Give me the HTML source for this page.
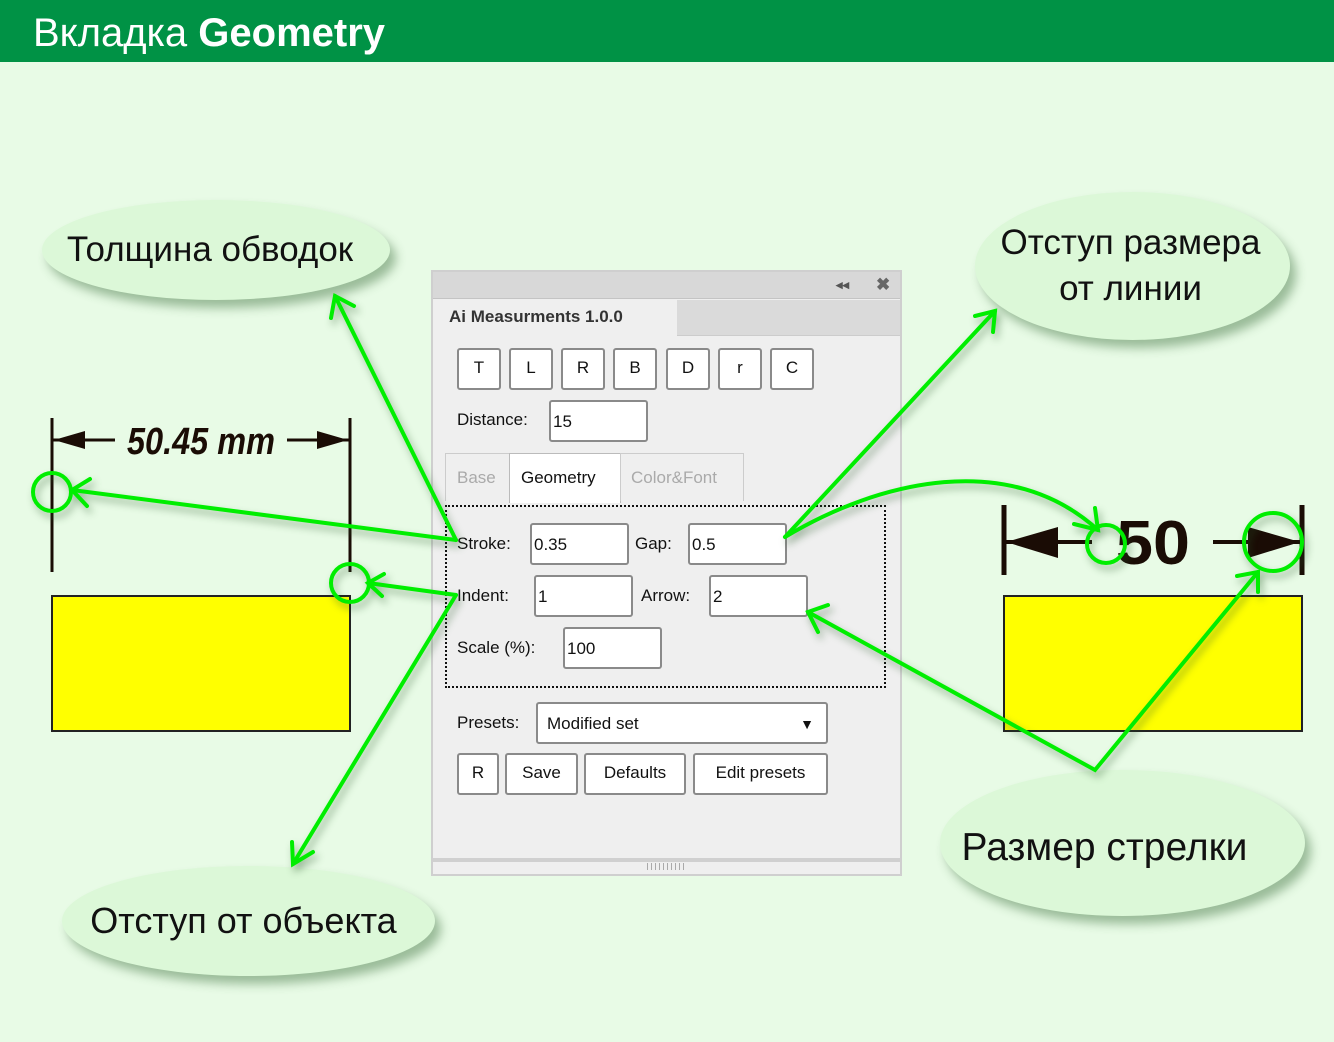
<!DOCTYPE html>
<html><head><meta charset="utf-8"><style>
*{margin:0;padding:0;box-sizing:border-box}
body{width:1334px;height:1042px;background:#e8fbe6;position:relative;overflow:hidden;font-family:"Liberation Sans",sans-serif}
.hdr{position:absolute;left:0;top:0;width:1334px;height:62px;background:#009245;color:#fff;font-size:40px;padding-left:33px;line-height:66px}
.ell{position:absolute;background:#dcf8d8;border-radius:50%;box-shadow:6px 8px 10px rgba(60,110,60,.45);display:flex;align-items:center;justify-content:center;text-align:center;font-size:35px;color:#111;line-height:46px}
.a{position:absolute}
.panel{position:absolute;left:431px;top:270px;width:471px;height:606px;background:#efefef;border:2px solid #cfcfcf;font-size:17px;color:#111}
.b{position:absolute;background:#fff;border:2px solid #8a8a8a;border-radius:3px;text-align:center;line-height:36px}
.in{position:absolute;background:#fff;border:2px solid #8a8a8a;border-radius:3px;padding-left:2px;line-height:40px}
.l{position:absolute}
.yr{position:absolute;background:#ffff00;border:2px solid #222}
</style></head><body>
<div class="hdr">Вкладка <b>Geometry</b></div>

<div class="ell" style="left:42px;top:200px;width:348px;height:100px;padding-right:12px">Толщина обводок</div>
<div class="ell" style="left:975px;top:192px;width:315px;height:148px;padding-right:4px">Отступ размера<br>от линии</div>
<div class="ell" style="left:940px;top:770px;width:365px;height:146px;font-size:39px;padding-right:36px;padding-top:10px">Размер стрелки</div>
<div class="ell" style="left:62px;top:866px;width:373px;height:110px;font-size:36px;padding-right:10px;padding-top:0">Отступ от объекта</div>

<div class="yr" style="left:51px;top:595px;width:300px;height:137px"></div>
<div class="yr" style="left:1003px;top:595px;width:300px;height:137px"></div>

<svg class="a" style="left:0;top:0" width="1334" height="1042">
<g stroke="#1a0c05" stroke-width="3" fill="#1a0c05">
<line x1="52" y1="418" x2="52" y2="572"/><line x1="350" y1="418" x2="350" y2="572"/>
<line x1="52" y1="440" x2="115" y2="440"/><line x1="287" y1="440" x2="350" y2="440"/>
<polygon points="54,440 85,431 85,449" stroke="none"/><polygon points="348,440 317,431 317,449" stroke="none"/>
<line x1="1004" y1="505" x2="1004" y2="575" stroke-width="5"/><line x1="1302" y1="505" x2="1302" y2="575" stroke-width="5"/>
<line x1="1004" y1="542" x2="1092" y2="542" stroke-width="4"/><line x1="1213" y1="542" x2="1300" y2="542" stroke-width="4"/>
<polygon points="1006,542 1058,527 1058,558" stroke="none"/><polygon points="1300,542 1248,527 1248,558" stroke="none"/>
</g>
<text x="127" y="454" font-family="Liberation Sans" font-style="italic" font-weight="bold" font-size="38" fill="#1a0c05" textLength="148" lengthAdjust="spacingAndGlyphs">50.45 mm</text>
<text x="1116" y="564" font-family="Liberation Sans" font-weight="bold" font-size="62" fill="#1a0c05" textLength="74" lengthAdjust="spacingAndGlyphs">50</text>
</svg>

<div class="panel">
<div style="position:absolute;left:0;top:0;width:467px;height:27px;background:#d8d8d8;border-bottom:1px solid #c4c4c4"></div>
<div style="position:absolute;left:403px;top:5px;font-size:13px;color:#555;font-weight:bold">◂◂</div>
<div style="position:absolute;left:443px;top:3px;font-size:17px;color:#666;font-weight:bold">✖</div>
<div style="position:absolute;left:0;top:28px;width:467px;height:36px;background:#dadada;border-bottom:1px solid #ccc"></div>
<div style="position:absolute;left:0;top:28px;width:244px;height:37px;background:#efefef;font-weight:bold;padding:7px 0 0 16px;color:#333">Ai Measurments 1.0.0</div>
<div class="b" style="left:24px;top:76px;width:44px;height:42px">T</div>
<div class="b" style="left:76px;top:76px;width:44px;height:42px">L</div>
<div class="b" style="left:128px;top:76px;width:44px;height:42px">R</div>
<div class="b" style="left:180px;top:76px;width:44px;height:42px">B</div>
<div class="b" style="left:233px;top:76px;width:44px;height:42px">D</div>
<div class="b" style="left:285px;top:76px;width:44px;height:42px">r</div>
<div class="b" style="left:337px;top:76px;width:44px;height:42px">C</div>
<div class="l" style="left:24px;top:138px">Distance:</div>
<div class="in" style="left:116px;top:128px;width:99px;height:42px">15</div>
<div style="position:absolute;left:12px;top:181px;width:66px;height:48px;border:1px solid #ccc;border-bottom:none;color:#aaa;padding:14px 0 0 11px">Base</div>
<div style="position:absolute;left:76px;top:181px;width:112px;height:50px;border:1px solid #bbb;border-bottom:none;background:#fff;padding:14px 0 0 11px">Geometry</div>
<div style="position:absolute;left:187px;top:181px;width:124px;height:48px;border:1px solid #ccc;border-bottom:none;color:#aaa;padding:14px 0 0 10px">Color&amp;Font</div>
<div style="position:absolute;left:12px;top:233px;width:441px;height:183px;border:2px dotted #111"></div>
<div class="l" style="left:24px;top:262px">Stroke:</div>
<div class="in" style="left:97px;top:251px;width:99px;height:42px">0.35</div>
<div class="l" style="left:202px;top:262px">Gap:</div>
<div class="in" style="left:255px;top:251px;width:99px;height:42px">0.5</div>
<div class="l" style="left:24px;top:314px">Indent:</div>
<div class="in" style="left:101px;top:303px;width:99px;height:42px">1</div>
<div class="l" style="left:208px;top:314px">Arrow:</div>
<div class="in" style="left:276px;top:303px;width:99px;height:42px">2</div>
<div class="l" style="left:24px;top:366px">Scale (%):</div>
<div class="in" style="left:130px;top:355px;width:99px;height:42px">100</div>
<div class="l" style="left:24px;top:441px">Presets:</div>
<div class="in" style="left:103px;top:430px;width:292px;height:42px;padding-left:9px">Modified set<span style="position:absolute;right:12px;top:0;font-size:14px">▼</span></div>
<div class="b" style="left:24px;top:481px;width:42px;height:42px">R</div>
<div class="b" style="left:72px;top:481px;width:73px;height:42px">Save</div>
<div class="b" style="left:151px;top:481px;width:102px;height:42px">Defaults</div>
<div class="b" style="left:260px;top:481px;width:135px;height:42px">Edit presets</div>
<div style="position:absolute;left:0;top:586px;width:467px;height:4px;background:#d0d0d0"></div>
<div style="position:absolute;left:214px;top:591px;width:40px;height:7px;background:repeating-linear-gradient(90deg,#aaa 0 1px,transparent 1px 4px)"></div>
</div>

<svg class="a" style="left:0;top:0;filter:drop-shadow(3px 5px 4px rgba(40,90,40,.45))" width="1334" height="1042">
<g stroke="#00ee00" stroke-width="4" fill="none" stroke-linecap="round">
<line x1="456" y1="540" x2="335" y2="296"/><polyline points="331,318 335,296 354,306"/>
<line x1="456" y1="540" x2="72" y2="490"/><polyline points="90,479 72,490 87,506"/>
<circle cx="52" cy="492" r="19"/>
<line x1="456" y1="595" x2="368" y2="583"/><polyline points="384,574 368,583 382,596"/>
<circle cx="350" cy="583" r="19"/>
<line x1="456" y1="595" x2="293" y2="864"/><polyline points="292,842 293,864 313,852"/>
<line x1="785" y1="537" x2="995" y2="311"/><polyline points="975,316 995,311 993,332"/>
<path d="M785,537 C880,480 1010,450 1098,530"/><polyline points="1074,524 1098,530 1095,508"/>
<circle cx="1106" cy="544" r="19"/>
<polyline points="808,612 1095,770 1258,572"/><polyline points="1237,576 1258,572 1258,592"/>
<polyline points="828,605 808,612 818,632"/>
<circle cx="1273" cy="542" r="29"/>
</g>
</svg>
</body></html>
